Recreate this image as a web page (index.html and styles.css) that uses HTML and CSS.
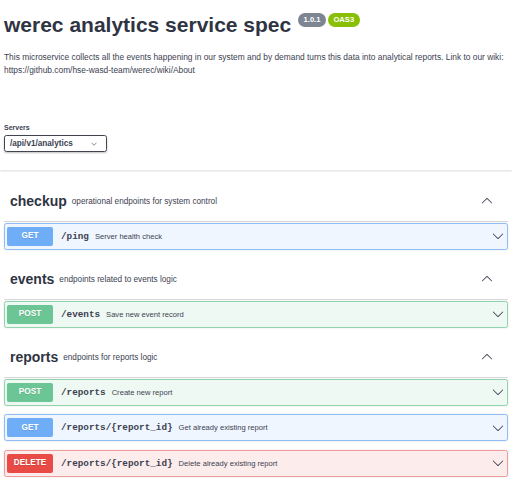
FILE: index.html
```html
<!DOCTYPE html>
<html>
<head>
<meta charset="utf-8">
<link rel="stylesheet" href="styles.css">
</head>
<body>
<div class="wrap">
  <div class="info">
    <h2 class="title">werec analytics service spec <span class="pill pill-ver">1.0.1</span><span class="pill pill-oas">OAS3</span></h2>
    <p class="desc">This microservice collects all the events happening in our system and by demand turns this data into analytical reports. Link to our wiki: https://github.com/hse-wasd-team/werec/wiki/About</p>
  </div>
</div>

<div class="scheme">
  <div class="wrap">
    <div class="servers-title">Servers</div>
    <div class="select">
      <span>/api/v1/analytics</span>
      <svg class="sel-arrow" viewBox="0 0 20 20" width="6" height="6"><path d="M17.418 6.109c.272-.268.709-.268.979 0s.271.701 0 .969l-7.908 7.83c-.27.268-.707.268-.979 0l-7.908-7.83c-.27-.268-.27-.701 0-.969.271-.268.709-.268.979 0L10 13.25l7.418-7.141z"/></svg>
    </div>
  </div>
</div>

<div class="wrap">
  <section class="tag-section">
    <div class="tag">
      <h3 class="tag-name">checkup</h3>
      <span class="tag-desc">operational endpoints for system control</span>
      <svg class="tag-arrow" viewBox="0 0 20 20" width="12" height="12"><path d="M17.418 13.891c.272.268.709.268.979 0s.271-.701 0-.969l-7.908-7.83c-.27-.268-.707-.268-.979 0l-7.908 7.83c-.27.268-.27.701 0 .969.271.268.709.268.979 0L10 6.75l7.418 7.141z"/></svg>
    </div>
    <div class="op op-get">
      <span class="method">GET</span>
      <span class="path">/ping</span>
      <span class="summary">Server health check</span>
      <svg class="op-arrow" viewBox="0 0 20 20" width="12" height="12"><path d="M17.418 6.109c.272-.268.709-.268.979 0s.271.701 0 .969l-7.908 7.83c-.27.268-.707.268-.979 0l-7.908-7.83c-.27-.268-.27-.701 0-.969.271-.268.709-.268.979 0L10 13.25l7.418-7.141z"/></svg>
    </div>
  </section>

  <section class="tag-section">
    <div class="tag">
      <h3 class="tag-name">events</h3>
      <span class="tag-desc">endpoints related to events logic</span>
      <svg class="tag-arrow" viewBox="0 0 20 20" width="12" height="12"><path d="M17.418 13.891c.272.268.709.268.979 0s.271-.701 0-.969l-7.908-7.83c-.27-.268-.707-.268-.979 0l-7.908 7.83c-.27.268-.27.701 0 .969.271.268.709.268.979 0L10 6.75l7.418 7.141z"/></svg>
    </div>
    <div class="op op-post">
      <span class="method">POST</span>
      <span class="path">/events</span>
      <span class="summary">Save new event record</span>
      <svg class="op-arrow" viewBox="0 0 20 20" width="12" height="12"><path d="M17.418 6.109c.272-.268.709-.268.979 0s.271.701 0 .969l-7.908 7.83c-.27.268-.707.268-.979 0l-7.908-7.83c-.27-.268-.27-.701 0-.969.271-.268.709-.268.979 0L10 13.25l7.418-7.141z"/></svg>
    </div>
  </section>

  <section class="tag-section">
    <div class="tag">
      <h3 class="tag-name">reports</h3>
      <span class="tag-desc">endpoints for reports logic</span>
      <svg class="tag-arrow" viewBox="0 0 20 20" width="12" height="12"><path d="M17.418 13.891c.272.268.709.268.979 0s.271-.701 0-.969l-7.908-7.83c-.27-.268-.707-.268-.979 0l-7.908 7.83c-.27.268-.27.701 0 .969.271.268.709.268.979 0L10 6.75l7.418 7.141z"/></svg>
    </div>
    <div class="op op-post">
      <span class="method">POST</span>
      <span class="path">/reports</span>
      <span class="summary">Create new report</span>
      <svg class="op-arrow" viewBox="0 0 20 20" width="12" height="12"><path d="M17.418 6.109c.272-.268.709-.268.979 0s.271.701 0 .969l-7.908 7.83c-.27.268-.707.268-.979 0l-7.908-7.83c-.27-.268-.27-.701 0-.969.271-.268.709-.268.979 0L10 13.25l7.418-7.141z"/></svg>
    </div>
    <div class="op op-get">
      <span class="method">GET</span>
      <span class="path">/reports/{report_id}</span>
      <span class="summary">Get already existing report</span>
      <svg class="op-arrow" viewBox="0 0 20 20" width="12" height="12"><path d="M17.418 6.109c.272-.268.709-.268.979 0s.271.701 0 .969l-7.908 7.83c-.27.268-.707.268-.979 0l-7.908-7.83c-.27-.268-.27-.701 0-.969.271-.268.709-.268.979 0L10 13.25l7.418-7.141z"/></svg>
    </div>
    <div class="op op-delete">
      <span class="method">DELETE</span>
      <span class="path">/reports/{report_id}</span>
      <span class="summary">Delete already existing report</span>
      <svg class="op-arrow" viewBox="0 0 20 20" width="12" height="12"><path d="M17.418 6.109c.272-.268.709-.268.979 0s.271.701 0 .969l-7.908 7.83c-.27.268-.707.268-.979 0l-7.908-7.83c-.27-.268-.27-.701 0-.969.271-.268.709-.268.979 0L10 13.25l7.418-7.141z"/></svg>
    </div>
  </section>
</div>
</body>
</html>
```

FILE: styles.css
```css
* { box-sizing: border-box; }
html, body { margin: 0; padding: 0; background: #fff; }
body {
  font-family: "Liberation Sans", Arial, sans-serif;
  color: #3b4151;
}
.wrap { padding: 0 4px; }

.info { margin: 0 0 29px; }
.title {
  margin: 13px 0 0;
  font-size: 21px;
  line-height: 24px;
  font-weight: 700;
  color: #2f3443;
}
.pill {
  display: inline-block;
  vertical-align: top;
  font-size: 7.6px;
  line-height: 9px;
  padding: 2px 5.5px 2.5px;
  border-radius: 20px;
  color: #fff;
  font-weight: 700;
}
.pill-ver { background: #7d8492; margin-left: 1px; }
.pill-oas { background: #89bf04; margin-left: 2px; }
.desc {
  margin: 14px 0 0;
  font-size: 8.4px;
  line-height: 13px;
  color: #3b4151;
}

.scheme {
  background: #fff;
  box-shadow: 0 1px 2px 0 rgba(0,0,0,.15);
  padding: 18px 0 18px;
  margin: 0 0 12px;
}
.servers-title {
  font-size: 7px;
  line-height: 8px;
  font-weight: 700;
  margin: 0 0 3px;
}
.select {
  display: flex;
  align-items: center;
  width: 103px;
  height: 17px;
  padding: 0 0 0 5px;
  border: 1.2px solid #41444e;
  border-radius: 2.5px;
  box-shadow: 0 1px 2px 0 rgba(0,0,0,.25);
  font-size: 8.2px;
  font-weight: 700;
  color: #3b4151;
}
.select span { flex: 1; }
.sel-arrow { fill: #3b4151; margin-right: 9px; }

.tag-section { padding-bottom: 2px; }
.tag {
  display: flex;
  align-items: center;
  padding: 9px 15px 10px 6px;
  border-bottom: 1px solid rgba(59,65,81,.2);
  margin: 0 0 0.5px;
}
.tag-name {
  margin: 0;
  font-size: 14px;
  line-height: 20px;
  font-weight: 700;
  color: #2f3443;
}
.tag-desc {
  flex: 1;
  padding: 0 5px;
  font-size: 8.2px;
  color: #3b4151;
}
.tag-arrow { fill: #3b4151; }

.op {
  display: flex;
  align-items: center;
  padding: 3px 3px 3px 2px;
  border: 1px solid;
  border-radius: 2.5px;
  box-shadow: 0 0 2px rgba(0,0,0,.12);
  margin: 0 0 8.5px;
}
.method {
  min-width: 46px;
  padding: 3.5px 0;
  border-radius: 2px;
  text-align: center;
  font-size: 8.2px;
  line-height: 12px;
  font-weight: 700;
  color: #fff;
  text-shadow: 0 1px 0 rgba(0,0,0,.1);
}
.path {
  padding: 0 6px 0 8px;
  font-family: "Liberation Mono", "Courier New", monospace;
  font-size: 9.3px;
  font-weight: 700;
  color: #3b4151;
}
.summary {
  flex: 1;
  font-size: 7.6px;
  color: #3b4151;
}
.op-arrow { fill: #3b4151; }

.op-get { background: #eff6ff; border-color: #8fbdf5; }
.op-get .method { background: #6fadf7; }
.op-post { background: #eff9f3; border-color: #90d3ad; }
.op-post .method { background: #6cc594; }
.op-delete { background: #fdecec; border-color: #ee9b9b; }
.op-delete .method { background: #e84a45; }
```
